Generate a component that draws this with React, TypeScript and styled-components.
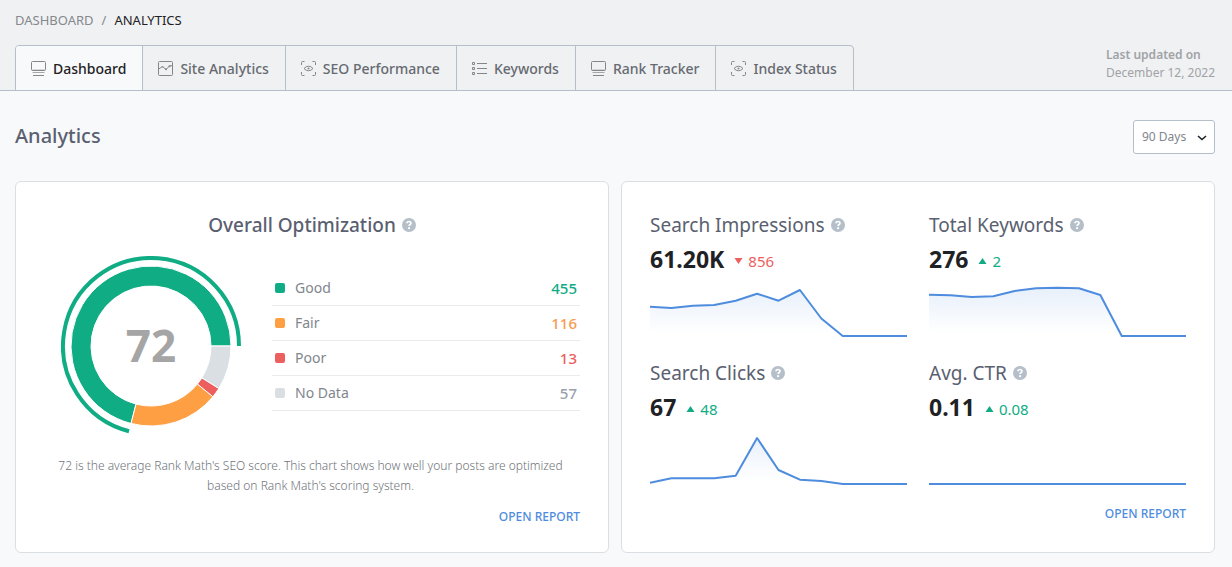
import React, { useId } from 'react';
import styled, { createGlobalStyle } from 'styled-components';

const color = {
  page: '#f8f9fb',
  header: '#f0f1f3',
  line: '#b5bfc9',
  cardLine: '#dadfe4',
  heading: '#5a6070',
  text: '#7f868d',
  muted: '#a0a3a6',
  green: '#10ac84',
  orange: '#ff9f43',
  red: '#ed5e5e',
  grey: '#dadfe4',
  blue: '#4e8cde',
};

const GlobalStyle = createGlobalStyle`
  *, *::before, *::after { box-sizing: border-box; }
  body {
    margin: 0;
    min-height: 100vh;
    background: ${color.page};
    color: ${color.heading};
    font-family: "Noto Sans", "Open Sans", sans-serif;
    font-size: 14px;
    line-height: 20px;
  }
  h1, h2, h3, p, ul { margin: 0; padding: 0; }
  ul { list-style: none; }
  a { color: inherit; text-decoration: none; }
`;

const Header = styled.header`
  padding: 10px 17px 0 15px;
  background: ${color.header};
  box-shadow: inset 0 -1px 0 ${color.line};
`;

const Breadcrumb = styled.nav`
  display: flex;
  gap: 8px;
  font-size: 13px;
  font-weight: 400;
  text-transform: uppercase;
  color: #85888c;
`;

const Current = styled.span`
  color: #1f2224;
`;

const HeaderRow = styled.div`
  display: flex;
  justify-content: space-between;
  align-items: flex-start;
  margin-top: 15px;
`;

const Tabs = styled.nav`
  display: flex;
  height: 46px;
  border: 1px solid ${color.line};
  border-radius: 4px 4px 0 0;
  overflow: hidden;
`;

const Tab = styled.a<{ $active?: boolean }>`
  display: flex;
  align-items: center;
  gap: 6px;
  height: 46px;
  padding: 0 16px 0 15px;
  font-size: 14px;
  font-weight: 500;
  white-space: nowrap;
  color: ${(p) => (p.$active ? '#1f2224' : '#666a70')};
  background: ${(p) => (p.$active ? color.page : 'transparent')};

  & + & {
    border-left: 1px solid ${color.line};
  }

  svg {
    flex: none;
    color: #85868b;
  }
`;

const Updated = styled.p`
  padding-top: 1px;
  font-size: 12px;
  line-height: 18px;
  color: ${color.muted};

  strong {
    display: block;
    font-weight: 600;
  }
`;

const Main = styled.main`
  padding: 29px 17px 14px 15px;
`;

const TitleRow = styled.div`
  display: flex;
  justify-content: space-between;
  align-items: flex-start;
  margin-bottom: 27px;
`;

const PageTitle = styled.h1`
  font-size: 20px;
  line-height: 32px;
  font-weight: 500;
`;

const SelectWrap = styled.div`
  position: relative;

  svg {
    position: absolute;
    right: 8px;
    top: 13px;
    pointer-events: none;
  }
`;

const Select = styled.select`
  appearance: none;
  width: 82px;
  height: 34px;
  padding: 0 8px;
  border: 1px solid ${color.line};
  border-radius: 3px;
  background: #fff;
  color: ${color.text};
  font: inherit;
  font-size: 12px;
`;

const Cards = styled.div`
  display: grid;
  grid-template-columns: 1fr 1fr;
  gap: 12px;
`;

const Card = styled.section`
  display: flex;
  flex-direction: column;
  min-height: 372px;
  padding: 28px 28px 24px;
  background: #fff;
  border: 1px solid ${color.cardLine};
  border-radius: 6px;
`;

const Heading = styled.h2<{ $center?: boolean }>`
  display: flex;
  align-items: center;
  justify-content: ${(p) => (p.$center ? 'center' : 'flex-start')};
  gap: 6px;
  font-size: 19px;
  line-height: 30px;
  font-weight: ${(p) => (p.$center ? 500 : 400)};
  white-space: nowrap;
`;

const Help = styled.button`
  display: flex;
  padding: 0;
  border: 0;
  background: none;
  cursor: help;
`;

const Overview = styled.div`
  display: flex;
  align-items: flex-start;
  gap: 31px;
  margin: 16px 0 20px;
  padding-left: 17px;
`;

const Legend = styled.ul`
  flex: 1;
  padding-top: 15px;
`;

const LegendRow = styled.li`
  display: flex;
  align-items: center;
  height: 35px;
  padding: 0 3px;
  border-bottom: 1px solid #e8eaec;
  font-size: 14px;
  color: ${color.text};
`;

const Swatch = styled.span<{ $color: string }>`
  width: 10px;
  height: 10px;
  margin-right: 10px;
  border-radius: 2px;
  background: ${(p) => p.$color};
`;

const Count = styled.span<{ $color: string }>`
  margin-left: auto;
  font-size: 15px;
  font-weight: 500;
  color: ${(p) => p.$color};
`;

const Note = styled.p`
  padding: 0 8px 0 5px;
  font-size: 12px;
  font-weight: 300;
  text-align: center;
  color: #6f7479;
`;

const ReportLink = styled.a`
  align-self: flex-end;
  margin-top: 11px;
  font-size: 12px;
  font-weight: 500;
  text-transform: uppercase;
  color: ${color.blue};
`;

const Metrics = styled.div`
  display: grid;
  grid-template-columns: 1fr 1fr;
  gap: 17px 22px;
  margin-bottom: 4px;
`;

const Figures = styled.div`
  display: flex;
  align-items: center;
  gap: 10px;
  height: 38px;
  margin-bottom: 3px;
`;

const Value = styled.strong`
  font-size: 23px;
  font-weight: 700;
  color: #1f2224;
`;

const Delta = styled.span<{ $up: boolean }>`
  display: flex;
  align-items: center;
  gap: 5px;
  padding-top: 4px;
  font-size: 15px;
  color: ${(p) => (p.$up ? color.green : color.red)};
`;

const Chart = styled.svg`
  display: block;
  width: 100%;
  height: 60px;
`;

type IconName = 'screen' | 'trend' | 'eye' | 'list';

function TabIcon({ name }: { name: IconName }) {
  return (
    <svg width="16" height="16" viewBox="0 0 16 16" fill="none" stroke="currentColor" aria-hidden="true">
      {name === 'screen' && (
        <>
          <rect x="0.5" y="0.5" width="14" height="9" rx="1" />
          <path d="M1 9H14" opacity="0.5" />
          <path d="M1.5 11.5H13.5" opacity="0.7" />
          <path d="M2 14.5H13" />
        </>
      )}
      {name === 'trend' && (
        <>
          <rect x="0.5" y="0.5" width="14" height="14" rx="1" />
          <path d="M1 7.8L4.5 5.5L8 8.5L11.5 5L14.5 4.5" />
          <circle cx="4.5" cy="5.8" r="0.8" fill="currentColor" stroke="none" />
          <circle cx="8" cy="8.3" r="1" fill="currentColor" stroke="none" />
          <circle cx="11.5" cy="5.3" r="1" fill="currentColor" stroke="none" />
        </>
      )}
      {name === 'eye' && (
        <>
          <path d="M0.5 4V1.5Q0.5 0.5 1.5 0.5H3.5M11.5 0.5H13.5Q14.5 0.5 14.5 1.5V4M14.5 11V13.5Q14.5 14.5 13.5 14.5H11.5M3.5 14.5H1.5Q0.5 14.5 0.5 13.5V11" />
          <path d="M3 7.5Q5 5.2 7.5 5.2T12 7.5Q10 9.8 7.5 9.8T3 7.5Z" />
          <circle cx="7.5" cy="7.5" r="1" fill="currentColor" stroke="none" />
        </>
      )}
      {name === 'list' && (
        <>
          <path d="M0.5 1.5h2v2h-2zM0.5 6.5h2v2h-2zM0.5 11.5h2v2h-2z" />
          <path d="M5 2.5H15M5 7.5H15M5 12.5H15" />
        </>
      )}
    </svg>
  );
}

function HelpButton({ label }: { label: string }) {
  return (
    <Help type="button" aria-label={`About ${label}`}>
      <svg width="14" height="14" viewBox="0 0 14 14" aria-hidden="true">
        <circle cx="7" cy="7" r="7" fill="#b5bfc9" />
        <path
          d="M5 5.3C5 4.1 5.9 3.5 7 3.5S9 4.2 9 5.2C9 6.5 7.1 6.5 7.1 8"
          fill="none"
          stroke="#fff"
          strokeWidth="1.7"
        />
        <circle cx="7.1" cy="10.2" r="1.1" fill="#fff" />
      </svg>
    </Help>
  );
}

const scores = [
  { label: 'Good', count: 455, fill: color.green, text: color.green },
  { label: 'Fair', count: 116, fill: color.orange, text: '#f79a50' },
  { label: 'Poor', count: 13, fill: color.red, text: color.red },
  { label: 'No Data', count: 57, fill: color.grey, text: '#98a2ad' },
];
const total = scores.reduce((sum, s) => sum + s.count, 0);

const point = (r: number, share: number) => {
  const a = share * 2 * Math.PI;
  return `${90 + r * Math.cos(a)} ${90 - r * Math.sin(a)}`;
};

function Donut() {
  let start = 0;
  return (
    <svg width="180" height="180" viewBox="0 0 180 180" role="img" aria-label="Average SEO score">
      {scores.map((s) => {
        const end = start + s.count / total;
        const large = end - start > 0.5 ? 1 : 0;
        const d = `M${point(80, start)}A80 80 0 ${large} 0 ${point(80, end)}L${point(60, end)}A60 60 0 ${large} 1 ${point(60, start)}Z`;
        start = end;
        return <path key={s.label} d={d} fill={s.fill} stroke="#fff" />;
      })}
      <path
        d={`M${point(88, 0)}A88 88 0 1 0 ${point(88, scores[0].count / total)}`}
        fill="none"
        stroke={color.green}
        strokeWidth="4"
      />
      <text x="90" y="106" textAnchor="middle" fontSize="44" fontWeight="700" fill="#a5a5a5">
        72
      </text>
    </svg>
  );
}

function Sparkline({ values }: { values: number[] }) {
  const id = useId();
  const step = 257 / (values.length - 1);
  const line = values.map((y, i) => `${i * step},${y}`).join(' ');
  return (
    <Chart viewBox="0 0 257 60" preserveAspectRatio="none" aria-hidden="true">
      <defs>
        <linearGradient id={id} gradientUnits="userSpaceOnUse" x1="0" y1="5" x2="0" y2="52">
          <stop offset="0" stopColor={color.blue} stopOpacity="0.14" />
          <stop offset="1" stopColor={color.blue} stopOpacity="0" />
        </linearGradient>
      </defs>
      <polygon points={`0,55 ${line} 257,55`} fill={`url(#${id})`} />
      <polyline points={line} fill="none" stroke={color.blue} strokeWidth="2" strokeLinejoin="round" />
    </Chart>
  );
}

const tabs: { label: string; icon: IconName }[] = [
  { label: 'Dashboard', icon: 'screen' },
  { label: 'Site Analytics', icon: 'trend' },
  { label: 'SEO Performance', icon: 'eye' },
  { label: 'Keywords', icon: 'list' },
  { label: 'Rank Tracker', icon: 'screen' },
  { label: 'Index Status', icon: 'eye' },
];

const metrics = [
  {
    label: 'Search Impressions',
    value: '61.20K',
    delta: '856',
    up: false,
    values: [25.7, 27, 24.7, 24, 19.7, 12.7, 19.7, 9, 37.5, 55, 55, 55, 55],
  },
  {
    label: 'Total Keywords',
    value: '276',
    delta: '2',
    up: true,
    values: [13.7, 14.2, 16, 15.3, 10, 7.3, 6.7, 7.2, 14, 55, 55, 55, 55],
  },
  {
    label: 'Search Clicks',
    value: '67',
    delta: '48',
    up: true,
    values: [53.7, 49.3, 49.3, 49.3, 46.7, 9, 41, 50.7, 52, 55, 55, 55, 55],
  },
  {
    label: 'Avg. CTR',
    value: '0.11',
    delta: '0.08',
    up: true,
    values: [55, 55, 55, 55, 55, 55, 55, 55, 55, 55, 55, 55, 55],
  },
];

export default function App() {
  return (
    <>
      <GlobalStyle />
      <Header>
        <Breadcrumb aria-label="Breadcrumb">
          <a href="#dashboard">Dashboard</a>
          <span>/</span>
          <Current>Analytics</Current>
        </Breadcrumb>
        <HeaderRow>
          <Tabs aria-label="Sections">
            {tabs.map((t, i) => (
              <Tab key={t.label} href="#" $active={i === 0}>
                <TabIcon name={t.icon} />
                {t.label}
              </Tab>
            ))}
          </Tabs>
          <Updated>
            <strong>Last updated on</strong>
            December 12, 2022
          </Updated>
        </HeaderRow>
      </Header>
      <Main>
        <TitleRow>
          <PageTitle>Analytics</PageTitle>
          <SelectWrap>
            <Select aria-label="Period" defaultValue="90">
              <option value="7">7 Days</option>
              <option value="30">30 Days</option>
              <option value="90">90 Days</option>
            </Select>
            <svg width="10" height="10" viewBox="0 0 10 10" fill="none" stroke="#1f2224" strokeWidth="1.6" aria-hidden="true">
              <path d="M1 3L5 6.5L9 3" />
            </svg>
          </SelectWrap>
        </TitleRow>
        <Cards>
          <Card>
            <Heading $center>
              Overall Optimization
              <HelpButton label="Overall Optimization" />
            </Heading>
            <Overview>
              <Donut />
              <Legend>
                {scores.map((s) => (
                  <LegendRow key={s.label}>
                    <Swatch $color={s.fill} />
                    {s.label}
                    <Count $color={s.text}>{s.count}</Count>
                  </LegendRow>
                ))}
              </Legend>
            </Overview>
            <Note>
              72 is the average Rank Math's SEO score. This chart shows how well your posts are optimized based on Rank
              Math's scoring system.
            </Note>
            <ReportLink href="#report">Open Report</ReportLink>
          </Card>
          <Card>
            <Metrics>
              {metrics.map((m) => (
                <div key={m.label}>
                  <Heading>
                    {m.label}
                    <HelpButton label={m.label} />
                  </Heading>
                  <Figures>
                    <Value>{m.value}</Value>
                    <Delta $up={m.up}>
                      <svg width="9" height="8" viewBox="0 0 9 8" fill="currentColor" aria-hidden="true">
                        <path d={m.up ? 'M0.5 7L4.5 1L8.5 7Z' : 'M0.5 1H8.5L4.5 7Z'} />
                      </svg>
                      {m.delta}
                    </Delta>
                  </Figures>
                  <Sparkline values={m.values} />
                </div>
              ))}
            </Metrics>
            <ReportLink href="#report">Open Report</ReportLink>
          </Card>
        </Cards>
      </Main>
    </>
  );
}
